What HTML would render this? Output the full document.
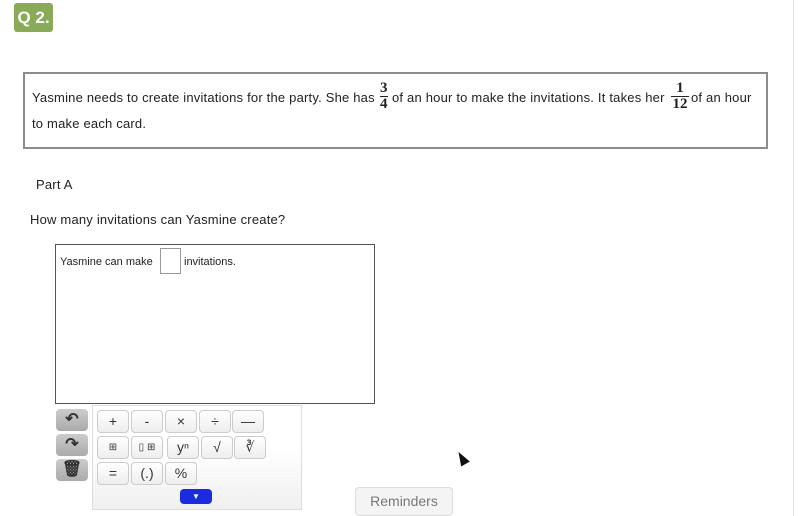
<!DOCTYPE html>
<html><head><style>
body{margin:0;width:798px;height:516px;background:#fff;font-family:"Liberation Sans",sans-serif;color:#222;position:relative;overflow:hidden}
.a{position:absolute}
.q{left:14px;top:3px;width:39px;height:29px;background:#89aa56;border-radius:3px;color:#fff;font-size:17px;font-weight:bold;text-align:center;line-height:29px}
.box{left:23px;top:72px;width:741px;height:73px;border:2px solid #8c8c8c}
.t{font-size:13px;color:#222;letter-spacing:0.2px}
.frac{position:absolute;font-family:"Liberation Serif",serif;font-weight:bold;font-size:15px;text-align:center;line-height:15px}
.frac i{display:block;border-top:1px solid #222;font-style:normal}
.ans{left:55px;top:244px;width:318px;height:158px;border:1px solid #555}
.side{left:56px;width:32px;height:22px;background:linear-gradient(#ccc,#aaa);border-radius:4px;color:#333;text-align:center;font-size:16px;line-height:22px;font-weight:bold}
.pad{left:92px;top:405px;width:208px;height:103px;border:1px solid #ddd;background:linear-gradient(#fff 40%,#f0f0f0)}
.k{position:absolute;width:30px;height:21px;border:1px solid #ccc;border-radius:4px;background:linear-gradient(#fff,#eee);text-align:center;font-size:14px;line-height:21px;color:#333}
</style></head><body>
<div class="a q">Q 2.</div>
<div class="a box"></div>
<div class="a t" style="left:32px;top:90px">Yasmine needs to create invitations for the party. She has</div>
<div class="frac" style="left:380px;top:81px">3<i>4</i></div>
<div class="a t" style="left:392px;top:90px">of an hour to make the invitations. It takes her</div>
<div class="frac" style="left:671px;top:81px;width:18px">1<i>12</i></div>
<div class="a t" style="left:691px;top:90px">of an hour</div>
<div class="a t" style="left:32px;top:116px">to make each card.</div>
<div class="a t" style="left:36px;top:177px">Part A</div>
<div class="a t" style="left:30px;top:212px">How many invitations can Yasmine create?</div>
<div class="a ans"></div>
<div class="a" style="left:60px;top:256px;font-size:11px">Yasmine can make</div>
<div class="a" style="left:160px;top:248px;width:19px;height:24px;border:1px solid #999"></div>
<div class="a" style="left:184px;top:256px;font-size:11px">invitations.</div>
<div class="a side" style="top:409px">&#x21B6;</div>
<div class="a side" style="top:434px">&#x21B7;</div>
<div class="a side" style="top:459px">&#x1F5D1;</div>
<div class="a pad"></div>
<div class="k" style="left:97px;top:410px">+</div>
<div class="k" style="left:131px;top:410px">-</div>
<div class="k" style="left:165px;top:410px">×</div>
<div class="k" style="left:199px;top:410px">÷</div>
<div class="k" style="left:232px;top:410px">—</div>
<div class="k" style="left:97px;top:436px;font-size:10px">⊞</div>
<div class="k" style="left:131px;top:436px;font-size:10px">▯ ⊞</div>
<div class="k" style="left:167px;top:436px">yⁿ</div>
<div class="k" style="left:201px;top:436px">√</div>
<div class="k" style="left:234px;top:436px">∛</div>
<div class="k" style="left:97px;top:462px">=</div>
<div class="k" style="left:131px;top:462px">(.)</div>
<div class="k" style="left:165px;top:462px">%</div>
<div class="a" style="left:180px;top:489px;width:32px;height:15px;background:#1a2be0;border-radius:4px;color:#fff;font-size:8px;text-align:center;line-height:15px">▼</div>
<div class="a" style="left:355px;top:487px;width:96px;height:27px;border:1px solid #ddd;border-radius:4px;background:#f4f4f4;color:#777;font-size:14px;text-align:center;line-height:27px">Reminders</div>
<div class="a" style="left:457px;top:451px;width:0;height:0;border-left:5px solid transparent;border-right:5px solid transparent;border-bottom:14px solid #111;transform:rotate(-30deg)"></div>
<div class="a" style="left:793px;top:0;width:1px;height:516px;background:#e4e4e4"></div>
</body></html>
